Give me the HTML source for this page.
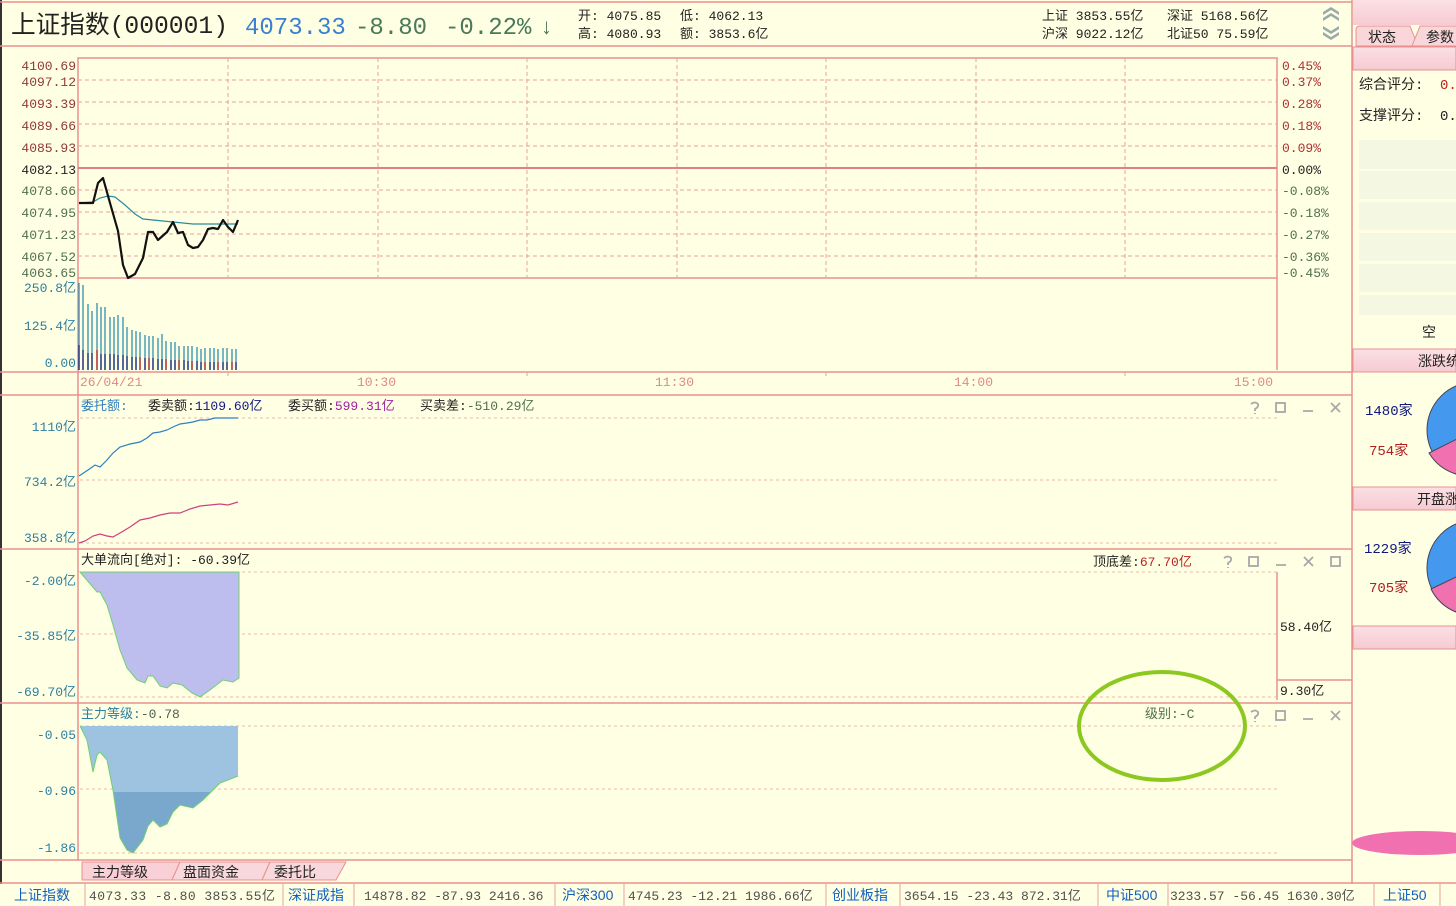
<!DOCTYPE html>
<html><head><meta charset="utf-8"><style>
body{margin:0;width:1456px;height:906px;overflow:hidden;background:#FFFFE4;}
svg{display:block;font-family:"Liberation Mono","Noto Sans CJK SC",monospace;}
.cj{font-family:"Liberation Sans","Noto Sans CJK SC",sans-serif;}
</style></head><body>
<svg width="1456" height="906" viewBox="0 0 1456 906" xmlns="http://www.w3.org/2000/svg">
<defs>
<linearGradient id="pk" x1="0" y1="0" x2="0" y2="1"><stop offset="0" stop-color="#FBE0E4"/><stop offset="1" stop-color="#F6CBD2"/></linearGradient>
<clipPath id="lo"><rect x="78" y="792" width="200" height="70"/></clipPath>
</defs>
<rect width="1456" height="906" fill="#FFFFE4"/>
<rect x="0" y="0" width="2" height="884" fill="#333"/>
<g stroke="#E89090" stroke-width="1.5" fill="none">
<line x1="0" y1="2" x2="1352" y2="2"/>
<line x1="0" y1="46" x2="1352" y2="46"/>
<line x1="1352" y1="0" x2="1352" y2="884"/>
<line x1="0" y1="372" x2="1352" y2="372"/>
<line x1="0" y1="395" x2="1352" y2="395"/>
<line x1="0" y1="549" x2="1352" y2="549"/>
<line x1="0" y1="703" x2="1352" y2="703"/>
<line x1="0" y1="860" x2="1352" y2="860"/>
<line x1="0" y1="883" x2="1456" y2="883"/>
<rect x="78" y="58" width="1199" height="220"/>
<line x1="1277" y1="278" x2="1277" y2="370"/>
<line x1="78" y1="278" x2="78" y2="395"/>
<line x1="78" y1="395" x2="78" y2="860"/>
<line x1="1277" y1="572" x2="1277" y2="700"/>
<line x1="1277" y1="680" x2="1352" y2="680"/>
</g>
<line x1="78" y1="168" x2="1277" y2="168" stroke="#E08080" stroke-width="2"/>
<g stroke="#E8A0A0" stroke-width="1" stroke-dasharray="4,3">
<line x1="78" y1="80" x2="1277" y2="80"/><line x1="78" y1="102" x2="1277" y2="102"/><line x1="78" y1="124" x2="1277" y2="124"/><line x1="78" y1="146" x2="1277" y2="146"/><line x1="78" y1="190" x2="1277" y2="190"/><line x1="78" y1="212" x2="1277" y2="212"/><line x1="78" y1="234" x2="1277" y2="234"/><line x1="78" y1="256" x2="1277" y2="256"/>
<line x1="228" y1="58" x2="228" y2="278"/><line x1="378" y1="58" x2="378" y2="278"/><line x1="527" y1="58" x2="527" y2="278"/><line x1="677" y1="58" x2="677" y2="278"/><line x1="826" y1="58" x2="826" y2="278"/><line x1="976" y1="58" x2="976" y2="278"/><line x1="1125" y1="58" x2="1125" y2="278"/>
<line x1="228" y1="372" x2="228" y2="376"/><line x1="527" y1="372" x2="527" y2="376"/><line x1="826" y1="372" x2="826" y2="376"/><line x1="1125" y1="372" x2="1125" y2="376"/>
</g>
<g stroke="#E8B8A8" stroke-width="1" stroke-dasharray="3,3">
<line x1="80" y1="418" x2="1277" y2="418"/><line x1="80" y1="480" x2="1277" y2="480"/><line x1="80" y1="543" x2="1277" y2="543"/>
<line x1="80" y1="572" x2="1277" y2="572"/><line x1="80" y1="634" x2="1277" y2="634"/><line x1="80" y1="697" x2="1277" y2="697"/>
<line x1="80" y1="726" x2="1277" y2="726"/><line x1="80" y1="789" x2="1277" y2="789"/><line x1="80" y1="853" x2="1277" y2="853"/>
</g>
<text x="11" y="33" font-size="25" fill="#222" textLength="217" lengthAdjust="spacingAndGlyphs">上证指数(000001)</text>
<text x="245" y="34" font-size="24" fill="#3A80D0">4073.33</text>
<text x="355" y="34" font-size="24" fill="#4A7A5A">-8.80</text>
<text x="445" y="34" font-size="24" fill="#4A7A5A">-0.22%</text>
<text x="541" y="34" font-size="22" fill="#4A7A5A" class="cj">↓</text>
<g font-size="13" fill="#222">
<text x="578" y="20">开: 4075.85</text><text x="680" y="20">低: 4062.13</text>
<text x="578" y="38">高: 4080.93</text><text x="680" y="38">额: 3853.6亿</text>
<text x="1042" y="20">上证 3853.55亿</text><text x="1167" y="20">深证 5168.56亿</text>
<text x="1042" y="38">沪深 9022.12亿</text><text x="1167" y="38">北证50 75.59亿</text>
</g>
<g fill="#9AA" ><path d="M1323 12l8-5 8 5v3l-8-5-8 5z M1323 18l8-5 8 5v3l-8-5-8 5z"/><path d="M1323 26l8 5 8-5v3l-8 5-8-5z M1323 32l8 5 8-5v3l-8 5-8-5z"/></g>
<g font-size="13" text-anchor="end">
<text x="76" y="70" fill="#903838">4100.69</text><text x="76" y="86" fill="#903838">4097.12</text><text x="76" y="108" fill="#903838">4093.39</text><text x="76" y="130" fill="#903838">4089.66</text><text x="76" y="152" fill="#903838">4085.93</text>
<text x="76" y="174" fill="#222">4082.13</text>
<text x="76" y="195" fill="#507050">4078.66</text><text x="76" y="217" fill="#507050">4074.95</text><text x="76" y="239" fill="#507050">4071.23</text><text x="76" y="261" fill="#507050">4067.52</text><text x="76" y="277" fill="#507050">4063.65</text>
<text x="76" y="292" fill="#2F7F9F">250.8亿</text><text x="76" y="330" fill="#2F7F9F">125.4亿</text><text x="76" y="367" fill="#2F7F9F">0.00</text>
<text x="76" y="431" fill="#2F7F9F">1110亿</text><text x="76" y="486" fill="#2F7F9F">734.2亿</text><text x="76" y="542" fill="#2F7F9F">358.8亿</text>
<text x="76" y="585" fill="#2F7F9F">-2.00亿</text><text x="76" y="640" fill="#2F7F9F">-35.85亿</text><text x="76" y="696" fill="#2F7F9F">-69.70亿</text>
<text x="76" y="739" fill="#2F7F9F">-0.05</text><text x="76" y="795" fill="#2F7F9F">-0.96</text><text x="76" y="852" fill="#2F7F9F">-1.86</text>
</g>
<g font-size="13">
<text x="1282" y="70" fill="#B03030">0.45%</text><text x="1282" y="86" fill="#B03030">0.37%</text><text x="1282" y="108" fill="#B03030">0.28%</text><text x="1282" y="130" fill="#B03030">0.18%</text><text x="1282" y="152" fill="#B03030">0.09%</text>
<text x="1282" y="174" fill="#222">0.00%</text>
<text x="1282" y="195" fill="#507050">-0.08%</text><text x="1282" y="217" fill="#507050">-0.18%</text><text x="1282" y="239" fill="#507050">-0.27%</text><text x="1282" y="261" fill="#507050">-0.36%</text><text x="1282" y="277" fill="#507050">-0.45%</text>
<text x="80" y="386" fill="#E08888">26/04/21</text><text x="357" y="386" fill="#E08888">10:30</text><text x="655" y="386" fill="#E08888">11:30</text><text x="954" y="386" fill="#E08888">14:00</text><text x="1234" y="386" fill="#E08888">15:00</text>
<text x="1280" y="631" fill="#222">58.40亿</text><text x="1280" y="695" fill="#222">9.30亿</text>
</g>
<g stroke-width="1.3">
<path stroke="#2F8FAF" d="M79 283V370M83 285V370M88 304V370M92 311V370M97 303V370M101 307V370M105 307V370M110 317V370M114 317V370M118 315V370M123 317V370M127 327V370M132 330V370M136 331V370M140 332V370M145 335V370M149 336V370M153 336V370M158 338V370M162 334V370M166 341V370M171 342V370M175 342V370M179 346V370M184 346V370M188 346V370M192 346V370M197 347V370M201 349V370M205 348V370M210 348V370M214 348V370M218 349V370M223 348V370M227 348V370M232 349V370M236 349V370"/>
<path stroke="#1A2A80" d="M79 345V370M83 350V370M88 353V370M92 353V370M101 354V370M105 354V370M110 354V370M114 354V370M118 355V370M123 355V370M127 356V370M132 357V370M136 357V370M145 358V370M153 358V370M158 359V370M162 359V370M171 360V370M175 360V370M184 360V370M188 361V370M197 361V370M201 362V370M210 362V370M214 362V370M223 362V370M227 362V370M236 362V370"/>
<path stroke="#C02020" d="M97 350V370M140 357V370M149 358V370M166 359V370M179 360V370M192 361V370M205 362V370M218 362V370M232 362V370"/>
</g>
<polyline fill="none" stroke="#2A8A9A" stroke-width="1.2" points="79,203 93,202 100,198 108,196 115,197 125,205 135,214 143,219 163,221 193,224 238,224"/>
<polyline fill="none" stroke="#111" stroke-width="2.2" stroke-linejoin="round" points="79,203 93,203 98,183 103,178 110,203 118,231 123,265 128,278 135,274 143,258 148,232 153,232 158,240 167,232 173,222 178,233 183,232 188,245 193,248 198,247 203,240 208,229 213,228 218,229 223,220 228,227 233,232 238,220"/>
<g font-size="13">
<text x="81" y="410" fill="#2F7FBF">委托额:</text>
<text x="148" y="410" fill="#222">委卖额:<tspan fill="#101880">1109.60亿</tspan></text>
<text x="288" y="410" fill="#222">委买额:<tspan fill="#A020A0">599.31亿</tspan></text>
<text x="420" y="410" fill="#222">买卖差:<tspan fill="#507050">-510.29亿</tspan></text>
<text x="81" y="564" fill="#222">大单流向[绝对]: -60.39亿</text>
<text x="1093" y="566" fill="#222">顶底差:<tspan fill="#C02020">67.70亿</tspan></text>
<text x="81" y="718" fill="#2F7F9F">主力等级:<tspan fill="#506050">-0.78</tspan></text>
<text x="1145" y="718" fill="#507050">级别:-C</text>
</g>
<polyline fill="none" stroke="#2F80C0" stroke-width="1.2" points="79,476 88,470 95,465 100,467 107,460 113,453 120,447 130,444 140,442 147,438 153,433 160,432 167,430 173,427 180,424 187,423 193,422 200,420 207,420 215,418 228,418 238,418"/>
<polyline fill="none" stroke="#D04080" stroke-width="1.2" points="79,543 85,541 93,536 100,534 107,536 113,537 120,533 130,527 140,520 150,518 160,515 170,513 180,513 190,509 200,506 210,505 220,504 228,505 238,502"/>
<polygon fill="#BDBDEE" stroke="#70D070" stroke-width="1" points="80,572 97,592 100,592 107,605 113,625 120,650 127,668 137,680 145,683 148,676 153,676 160,686 167,688 173,683 182,685 192,693 200,697 210,690 223,680 233,682 239,678 239,572"/>
<polygon fill="#9DC3E0" points="80,726 87,740 93,772 97,755 100,752 107,760 113,790 120,838 127,850 133,853 143,840 148,826 153,820 160,827 167,824 173,812 180,805 193,808 203,800 213,790 220,783 228,780 238,776 238,726"/>
<polygon fill="#7AA8CC" clip-path="url(#lo)" points="80,726 87,740 93,772 97,755 100,752 107,760 113,790 120,838 127,850 133,853 143,840 148,826 153,820 160,827 167,824 173,812 180,805 193,808 203,800 213,790 220,783 228,780 238,776 238,726"/>
<polyline fill="none" stroke="#70D070" stroke-width="1" points="80,726 87,740 93,772 97,755 100,752 107,760 113,790 120,838 127,850 133,853 143,840 148,826 153,820 160,827 167,824 173,812 180,805 193,808 203,800 213,790 220,783 228,780 238,776"/>
<g fill="none" stroke="#A8A8A8" stroke-width="1.8">
<g><path d="M1251 404q4-3 7 0q1 3-3 5v2M1255 413v1"/><rect x="1276" y="403" width="9" height="9"/><path d="M1303 411h10M1331 403l9 9M1340 403l-9 9"/></g>
<g transform="translate(-27 154)"><path d="M1251 404q4-3 7 0q1 3-3 5v2M1255 413v1"/><rect x="1276" y="403" width="9" height="9"/><path d="M1303 411h10M1331 403l9 9M1340 403l-9 9"/></g>
<rect x="1331" y="557" width="9" height="9"/>
<g transform="translate(0 308)"><path d="M1251 404q4-3 7 0q1 3-3 5v2M1255 413v1"/><rect x="1276" y="403" width="9" height="9"/><path d="M1303 411h10M1331 403l9 9M1340 403l-9 9"/></g>
</g>
<ellipse cx="1162" cy="726" rx="83" ry="54" fill="none" stroke="#8CC820" stroke-width="4"/>
<g stroke="#E89090" stroke-width="1">
<path d="M82 880V862h98l-8 18z" fill="#F8D0D6"/>
<path d="M172 880l8-18h90l-8 18z" fill="#F8D8DC"/>
<path d="M262 880l8-18h76l-10 18z" fill="#F8D8DC"/>
</g>
<g font-size="14" fill="#222" class="cj"><text x="92" y="877">主力等级</text><text x="183" y="877">盘面资金</text><text x="274" y="877">委托比</text></g>
<rect x="0" y="884" width="1456" height="22" fill="#FFFFE4"/>
<g stroke="#E8A0A0"><path d="M85 884v22M283 884v22M354 884v22M555 884v22M624 884v22M826 884v22M900 884v22M1098 884v22M1168 884v22M1374 884v22M1440 884v22"/></g>
<g font-size="14" class="cj" fill="#1060C0"><text x="14" y="900">上证指数</text><text x="288" y="900">深证成指</text><text x="562" y="900">沪深300</text><text x="832" y="900">创业板指</text><text x="1106" y="900">中证500</text><text x="1383" y="900">上证50</text></g>
<g font-size="13" fill="#505050"><text x="89" y="900" textLength="186">4073.33 -8.80 3853.55亿</text><text x="364" y="900">14878.82 -87.93 2416.36</text><text x="628" y="900">4745.23 -12.21 1986.66亿</text><text x="904" y="900">3654.15 -23.43 872.31亿</text><text x="1170" y="900">3233.57 -56.45 1630.30亿</text></g>
<rect x="1353" y="0" width="103" height="25" fill="url(#pk)"/>
<path d="M1356 46v-16q0-4 4-4h50l8 20z" fill="#F8D6DA" stroke="#E89090"/>
<path d="M1412 46l8-20h40v20z" fill="#F8D6DA" stroke="#E89090"/>
<text x="1368" y="42" font-size="14" fill="#222" class="cj">状态</text><text x="1426" y="42" font-size="14" fill="#222" class="cj">参数</text>
<rect x="1353" y="47" width="103" height="23" fill="url(#pk)" stroke="#E89090"/>
<text x="1359" y="89" font-size="14" fill="#222">综合评分:</text><text x="1440" y="89" font-size="14" fill="#C02020">0.</text>
<text x="1359" y="120" font-size="14" fill="#222">支撑评分:</text><text x="1440" y="120" font-size="14" fill="#222">0.</text>
<g fill="#F4F7E2"><rect x="1359" y="140" width="97" height="29"/><rect x="1359" y="171" width="97" height="28"/><rect x="1359" y="202" width="97" height="28"/><rect x="1359" y="233" width="97" height="28"/><rect x="1359" y="264" width="97" height="28"/><rect x="1359" y="295" width="97" height="20"/></g>
<text x="1422" y="337" font-size="14" fill="#222" class="cj">空</text>
<rect x="1353" y="349" width="103" height="23" fill="url(#pk)" stroke="#E89090"/>
<text x="1418" y="366" font-size="14" fill="#222" class="cj">涨跌统</text>
<text x="1365" y="415" font-size="14" fill="#101880">1480家</text><text x="1369" y="455" font-size="14" fill="#B02020">754家</text>
<circle cx="1475" cy="430" r="48" fill="#4499EE" stroke="#445" stroke-width="1"/>
<path d="M1475 430L1429 453A48 48 0 0 0 1456 474Z" fill="#F070B0" stroke="#445"/>
<rect x="1353" y="487" width="103" height="23" fill="url(#pk)" stroke="#E89090"/>
<text x="1417" y="504" font-size="14" fill="#222" class="cj">开盘涨</text>
<text x="1364" y="553" font-size="14" fill="#101880">1229家</text><text x="1369" y="592" font-size="14" fill="#B02020">705家</text>
<circle cx="1475" cy="568" r="48" fill="#4499EE" stroke="#445" stroke-width="1"/>
<path d="M1475 568L1431 589A48 48 0 0 0 1456 612Z" fill="#F070B0" stroke="#445"/>
<rect x="1353" y="626" width="103" height="23" fill="url(#pk)" stroke="#E89090"/>
<ellipse cx="1420" cy="843" rx="68" ry="12" fill="#F070B0"/>
</svg>
</body></html>
